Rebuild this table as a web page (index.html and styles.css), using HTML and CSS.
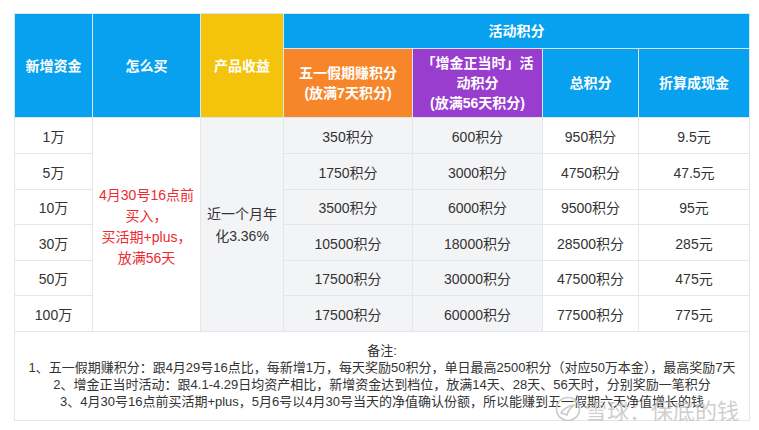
FILE: index.html
```html
<!DOCTYPE html>
<html lang="zh">
<head>
<meta charset="utf-8">
<link rel="stylesheet" href="styles.css">
</head>
<body>
<div class="page">
  <table class="grid">
    <colgroup>
      <col class="c1"><col class="c2"><col class="c3"><col class="c4"><col class="c5"><col class="c6"><col class="c7">
    </colgroup>
    <thead>
      <tr class="h1">
        <th rowspan="2" class="blue">新增资金</th>
        <th rowspan="2" class="blue">怎么买</th>
        <th rowspan="2" class="yellow">产品收益</th>
        <th colspan="4" class="blue">活动积分</th>
      </tr>
      <tr class="h2">
        <th class="orange">五一假期赚积分<br>(放满7天积分)</th>
        <th class="purple">「增金正当时」活<br>动积分<br>(放满56天积分)</th>
        <th class="blue">总积分</th>
        <th class="blue">折算成现金</th>
      </tr>
    </thead>
    <tbody>
      <tr class="r36">
        <td>1万</td>
        <td rowspan="6" class="red">4月30号16点前<br>买入，<br>买活期+plus，<br>放满56天</td>
        <td rowspan="6" class="grey yield">近一个月年<br>化3.36%</td>
        <td class="grey">350积分</td><td class="grey">600积分</td><td>950积分</td><td>9.5元</td>
      </tr>
      <tr class="r36"><td>5万</td><td class="grey">1750积分</td><td class="grey">3000积分</td><td>4750积分</td><td>47.5元</td></tr>
      <tr class="r35"><td>10万</td><td class="grey">3500积分</td><td class="grey">6000积分</td><td>9500积分</td><td>95元</td></tr>
      <tr class="r36"><td>30万</td><td class="grey">10500积分</td><td class="grey">18000积分</td><td>28500积分</td><td>285元</td></tr>
      <tr class="r35"><td>50万</td><td class="grey">17500积分</td><td class="grey">30000积分</td><td>47500积分</td><td>475元</td></tr>
      <tr class="r36"><td>100万</td><td class="grey">17500积分</td><td class="grey">60000积分</td><td>77500积分</td><td>775元</td></tr>
      <tr>
        <td colspan="7" class="notes">
          <p>备注:</p>
          <p>1、五一假期赚积分：跟4月29号16点比，每新增1万，每天奖励50积分，单日最高2500积分（对应50万本金），最高奖励7天</p>
          <p>2、增金正当时活动：跟4.1-4.29日均资产相比，新增资金达到档位，放满14天、28天、56天时，分别奖励一笔积分</p>
          <p>3、4月30号16点前买活期+plus，5月6号以4月30号当天的净值确认份额，所以能赚到五一假期六天净值增长的钱</p>
        </td>
      </tr>
    </tbody>
  </table>
  <div class="mark">
    <svg class="mark-logo" width="26" height="26" viewBox="0 0 26 26" aria-hidden="true">
      <circle cx="13" cy="13" r="11.5" fill="none" stroke="#c9c9c9" stroke-width="1.6"/>
      <path d="M6 17 C9 12 13 10 19 9 C15 12 13 15 12 19 C10 18 8 17.5 6 17 Z" fill="none" stroke="#c9c9c9" stroke-width="1.6" stroke-linejoin="round"/>
    </svg>
    <span>雪球：保底的钱</span>
  </div>
</div>
</body>
</html>
```
FILE: styles.css
```css
html, body {
  margin: 0;
  padding: 0;
  background: #ffffff;
}
body {
  font-family: "Liberation Sans", "Noto Sans CJK SC", sans-serif;
  color: #333333;
}
.page {
  position: relative;
  padding: 13px 10px 0 14px;
  width: 735px;
}
.grid {
  border-collapse: collapse;
  table-layout: fixed;
  width: 735px;
  border: 1px solid #e2e4e7;
}
.c1 { width: 78px; }
.c2 { width: 108px; }
.c3 { width: 83px; }
.c4 { width: 129px; }
.c5 { width: 130px; }
.c6 { width: 96px; }
.c7 { width: 111px; }

th {
  color: #ffffff;
  font-weight: bold;
  font-size: 14px;
  line-height: 20px;
  text-align: center;
  vertical-align: middle;
  padding: 0;
  border: 1px solid #d6e7f1;
}
.h1 { height: 35px; }
.h2 { height: 69px; }
.blue { background: #08a1ef; }
.yellow { background: #f4c30c; }
.orange { background: #f7862b; }
.purple { background: #993dce; }

td {
  font-size: 14px;
  text-align: center;
  vertical-align: middle;
  padding: 0;
  border: 1px solid #e4e6e9;
  background: #ffffff;
  color: #333333;
}
.r36 { height: 36px; }
.r35 { height: 35px; }
.grey { background: #f3f4f6; }
.red {
  color: #ee2a2f;
  line-height: 21px;
  padding-top: 4px;
}
.yield {
  line-height: 22px;
}
.notes {
  height: 88px;
  padding: 0;
  font-size: 13px;
  line-height: 17px;
  color: #333333;
  vertical-align: middle;
}
.notes p {
  margin: 0;
  white-space: nowrap;
}
.mark {
  position: absolute;
  left: 555px;
  top: 396px;
  display: flex;
  align-items: center;
  gap: 4px;
  color: rgba(190, 190, 190, 0.75);
  font-family: "Noto Sans CJK SC", sans-serif;
  font-size: 22px;
  line-height: 26px;
  pointer-events: none;
}
.mark-logo {
  flex: none;
}
```
